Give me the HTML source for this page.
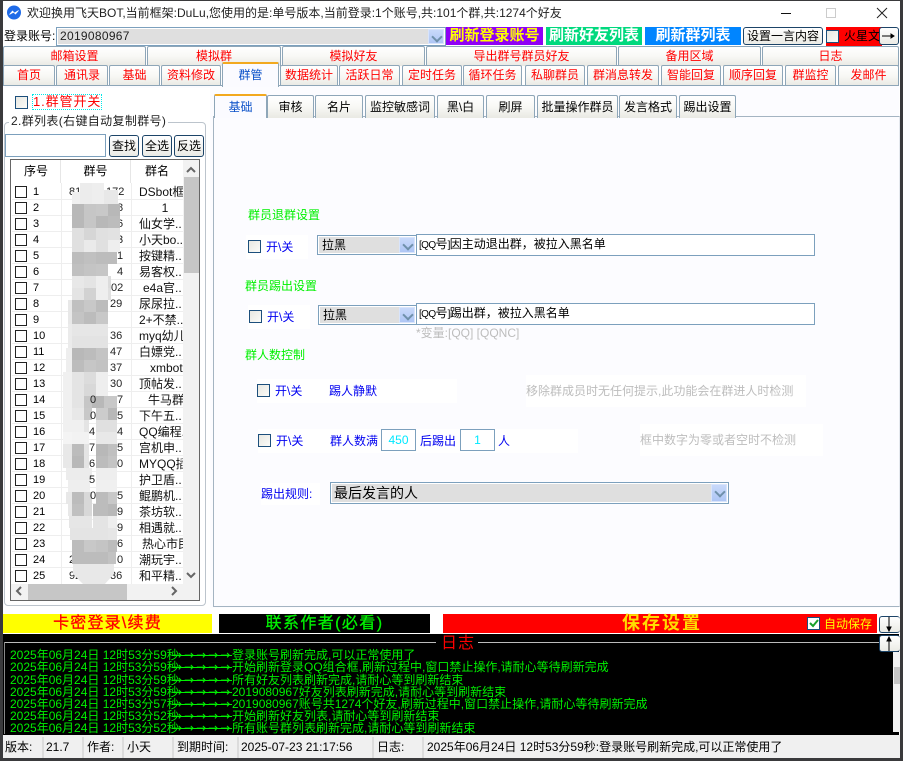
<!DOCTYPE html>
<html lang="zh"><head><meta charset="utf-8"><title>飞天BOT</title>
<style>
html,body{margin:0;padding:0;width:903px;height:761px;overflow:hidden;background:#3a3a3c}
*{box-sizing:border-box}
body{font:12px/16px "Liberation Sans","WenQuanYi Zen Hei","Noto Sans CJK SC",sans-serif;color:#000}
.a,.t,.l,.cb,.btn,.cmb,.inp,.s{position:absolute;white-space:nowrap}
.t{height:20px;line-height:19px;text-align:center;color:#f00;font-size:12px;background:linear-gradient(#fff,#f8f8f5 50%,#e9e9e3);border:1px solid #8ea6b8;border-bottom:0;border-radius:2px 2px 0 0;overflow:hidden}
.act{background:#fbfbff;border:1px solid #8ea6b8;border-top:2px solid #f2a91f;border-bottom:0;color:#0a50c8;z-index:3}
.st{height:23px;line-height:23px;top:95px;font-size:12px;color:#000}
.cb{width:13px;height:13px;border:1px solid #1c4f7c;background:linear-gradient(135deg,#e8e8e2,#fbfbf8)}
.btn{border:1px solid #1c4468;border-radius:3px;background:linear-gradient(#fff,#ebebe5);display:flex;align-items:center;justify-content:center;font-size:12px}
.inp{background:#fff;border:1px solid #7ca0bd;padding-left:2px}
.cmb{background:#dfdfdf;border:1px solid #7ca0bd;box-shadow:inset 0 0 0 1px #fff;font-size:12px;padding-left:4px}
.ar{position:absolute;right:1px;top:1px;bottom:1px;width:16px;background:linear-gradient(#c8d9fa,#aec6f5);border:1px solid #d8e4fb}
.ar:after{content:"";position:absolute;left:4px;top:3px;width:6px;height:6px;border:solid #6f90ab;border-width:0 2px 2px 0;transform:rotate(45deg)}
.g{color:#00f000;font-size:12px}.b{color:#0000f0;font-size:12px}
.gr{color:#bdbdbd;background:#fff;font-size:12px}
.s{top:736px;height:22px;line-height:22px;font-size:12px}
.sep{position:absolute;top:737px;height:21px;width:2px;background:#dcdcdc}
.h{position:absolute;top:160px;height:23px;line-height:23px;text-align:center;font-size:12px;border-right:1px solid #e6e6e6}
.ck{position:absolute;left:15px;width:12px;height:12px;border:1px solid #222;background:#fff}
.n{position:absolute;left:33px;width:20px;font-size:11px;line-height:16px}
.d{position:absolute;font-size:11px;line-height:16px;color:#222}
.m{position:absolute;left:139px;width:44px;overflow:hidden;font-size:12px;line-height:16px;white-space:nowrap;color:#111}
.hl{position:absolute;left:12px;width:171px;height:1px;background:#eee}
.lg{position:absolute;color:#00f000;font-size:12px;line-height:12px;white-space:nowrap;height:12px}
.lg i{font:12px/12px "DejaVu Sans",sans-serif;position:absolute;left:162px;width:60px;height:12px;letter-spacing:2px;background:linear-gradient(#00f000,#00f000) 0 6px/60px 1px no-repeat}
.lg b{font-weight:normal;position:absolute;left:222px}
.q{font-size:10px;letter-spacing:-.6px}
</style></head><body>

<!-- window -->
<div class="a" style="left:3px;top:1px;width:897px;height:757px;background:#fff"></div>

<!-- title -->
<svg class="a" style="left:6px;top:4px" width="16" height="17" viewBox="0 0 16 17"><circle cx="8" cy="8.5" r="7" fill="#1f6be8"/><path d="M3.5 10.5L6.5 7l2 2 4-2.5-3 3.5-2-1.8z" fill="#fff" stroke="#fff" stroke-width=".7"/></svg>
<div class="a" style="left:27px;top:4px;font:12px/18px 'Liberation Sans','Noto Sans CJK SC',sans-serif;color:#222">欢迎换用飞天BOT,当前框架:DuLu,您使用的是:单号版本,当前登录:1个账号,共:101个群,共:1274个好友</div>
<div class="a" style="left:781px;top:13px;width:10px;height:1px;background:#111"></div>
<div class="a" style="left:826px;top:8px;width:10px;height:10px;border:1px solid #ccc"></div>
<svg class="a" style="left:876px;top:7px" width="12" height="12"><path d="M1 1L11 11M11 1L1 11" stroke="#222" stroke-width="1"/></svg>

<!-- login row -->
<div class="a" style="left:4px;top:27px;font-size:12px;line-height:18px">登录账号:</div>
<div class="cmb" style="left:56px;top:27px;width:390px;height:19px;font-size:12px;line-height:17px;padding-left:3px;color:#222;letter-spacing:.3px">2019080967<span class="ar"></span></div>
<div class="a" style="left:446px;top:27px;width:97px;height:18px;background:#8f00f5;color:#ff0;text-align:center;font-size:15px;line-height:18px;font-weight:bold">刷新登录账号</div>
<div class="a" style="left:546px;top:27px;width:96px;height:18px;background:#00d97e;color:#fff;text-align:center;font-size:15px;line-height:18px;font-weight:bold">刷新好友列表</div>
<div class="a" style="left:645px;top:27px;width:96px;height:18px;background:#0085ff;color:#fff;text-align:center;font-size:15px;line-height:18px;font-weight:bold">刷新群列表</div>
<div class="btn" style="left:743px;top:27px;width:80px;height:18px">设置一言内容</div>
<div class="a" style="left:826px;top:27px;width:56px;height:19px;background:#f00;overflow:hidden;font-size:12px;line-height:19px;padding-left:18px">火星文</div>
<div class="cb" style="left:826px;top:30px"></div>
<div class="btn" style="left:879px;top:27px;width:20px;height:18px"></div>
<svg class="a" style="left:882px;top:30px" width="14" height="12"><path d="M0 6H12M9 4L12 6L9 8z" stroke="#000" fill="#000"/></svg>

<!-- tab rows -->
<div class="t" style="left:3px;top:46px;width:143px">邮箱设置</div>
<div class="t" style="left:147px;top:46px;width:134px">模拟群</div>
<div class="t" style="left:282px;top:46px;width:143px">模拟好友</div>
<div class="t" style="left:426px;top:46px;width:191px">导出群号群员好友</div>
<div class="t" style="left:618px;top:46px;width:143px">备用区域</div>
<div class="t" style="left:762px;top:46px;width:137px">日志</div>

<div class="t" style="left:3px;top:65px;width:52px;height:21px">首页</div>
<div class="t" style="left:56px;top:65px;width:52px;height:21px">通讯录</div>
<div class="t" style="left:109px;top:65px;width:51px;height:21px">基础</div>
<div class="t" style="left:161px;top:65px;width:60px;height:21px">资料修改</div>
<div class="t act" style="left:222px;top:62px;width:57px;height:25px;line-height:22px">群管</div>
<div class="t" style="left:280px;top:65px;width:58px;height:21px">数据统计</div>
<div class="t" style="left:339px;top:65px;width:61px;height:21px">活跃日常</div>
<div class="t" style="left:402px;top:65px;width:60px;height:21px">定时任务</div>
<div class="t" style="left:463px;top:65px;width:59px;height:21px">循环任务</div>
<div class="t" style="left:525px;top:65px;width:60px;height:21px">私聊群员</div>
<div class="t" style="left:587px;top:65px;width:72px;height:21px">群消息转发</div>
<div class="t" style="left:661px;top:65px;width:60px;height:21px">智能回复</div>
<div class="t" style="left:723px;top:65px;width:60px;height:21px">顺序回复</div>
<div class="t" style="left:785px;top:65px;width:51px;height:21px">群监控</div>
<div class="t" style="left:838px;top:65px;width:61px;height:21px">发邮件</div>
<div class="a" style="left:3px;top:85px;width:896px;height:1px;background:#8ea6b8;z-index:2"></div>
<div class="a" style="left:3px;top:86px;width:896px;height:522px;background:#fcfcff"></div>

<!-- left -->
<div class="a" style="left:4px;top:88px;width:206px;height:520px;background:#fff"></div>
<div class="cb" style="left:15px;top:96px"></div>
<div class="a" style="left:33px;top:95px;height:14px;line-height:14px;font-size:13px;letter-spacing:.9px;color:#f00;outline:1px dotted #00e8e8">1.群管开关</div>
<div class="a" style="left:4px;top:122px;width:202px;height:484px;border:1px solid #bcc4cc;border-radius:4px"></div>
<div class="a" style="left:9px;top:113px;background:#fff;padding:0 2px;font-size:12px;line-height:16px;color:#222;letter-spacing:.35px">2.群列表(右键自动复制群号)</div>
<div class="inp" style="left:5px;top:134px;width:101px;height:23px"></div>
<div class="btn" style="left:109px;top:135px;width:30px;height:22px">查找</div>
<div class="btn" style="left:142px;top:135px;width:30px;height:22px">全选</div>
<div class="btn" style="left:174px;top:135px;width:30px;height:22px">反选</div>

<div class="a" style="left:10px;top:159px;width:190px;height:442px;border:1px solid #666;background:#fff"></div>
<div class="h" style="left:12px;width:49px">序号</div>
<div class="h" style="left:61px;width:70px">群号</div>
<div class="h" style="left:131px;width:52px;border:0">群名</div>
<div class="a" style="left:61px;top:183px;width:1px;height:401px;background:#eee"></div>
<div class="a" style="left:131px;top:183px;width:1px;height:401px;background:#eee"></div>

<div class="hl" style="top:199px"></div><div class="hl" style="top:215px"></div><div class="hl" style="top:231px"></div><div class="hl" style="top:247px"></div><div class="hl" style="top:263px"></div><div class="hl" style="top:279px"></div><div class="hl" style="top:295px"></div><div class="hl" style="top:311px"></div><div class="hl" style="top:327px"></div><div class="hl" style="top:343px"></div><div class="hl" style="top:359px"></div><div class="hl" style="top:375px"></div><div class="hl" style="top:391px"></div><div class="hl" style="top:407px"></div><div class="hl" style="top:423px"></div><div class="hl" style="top:439px"></div><div class="hl" style="top:455px"></div><div class="hl" style="top:471px"></div><div class="hl" style="top:487px"></div><div class="hl" style="top:503px"></div><div class="hl" style="top:519px"></div><div class="hl" style="top:535px"></div><div class="hl" style="top:551px"></div><div class="hl" style="top:567px"></div>

<div class="ck" style="top:186px"></div><div class="n" style="top:184px">1</div><div class="m" style="top:184px">DSbot框架</div>
<div class="ck" style="top:202px"></div><div class="n" style="top:200px">2</div><div class="m" style="top:200px;text-align:center;padding-left:8px">1</div>
<div class="ck" style="top:218px"></div><div class="n" style="top:216px">3</div><div class="m" style="top:216px">仙女学..</div>
<div class="ck" style="top:234px"></div><div class="n" style="top:232px">4</div><div class="m" style="top:232px">小天bo..</div>
<div class="ck" style="top:250px"></div><div class="n" style="top:248px">5</div><div class="m" style="top:248px">按键精..</div>
<div class="ck" style="top:266px"></div><div class="n" style="top:264px">6</div><div class="m" style="top:264px">易客权..</div>
<div class="ck" style="top:282px"></div><div class="n" style="top:280px">7</div><div class="m" style="top:280px;left:143px;width:40px">e4a官..</div>
<div class="ck" style="top:298px"></div><div class="n" style="top:296px">8</div><div class="m" style="top:296px">尿尿拉..</div>
<div class="ck" style="top:314px"></div><div class="n" style="top:312px">9</div><div class="m" style="top:312px">2+不禁..</div>
<div class="ck" style="top:330px"></div><div class="n" style="top:328px">10</div><div class="m" style="top:328px">myq幼儿</div>
<div class="ck" style="top:346px"></div><div class="n" style="top:344px">11</div><div class="m" style="top:344px">白嫖党..</div>
<div class="ck" style="top:362px"></div><div class="n" style="top:360px">12</div><div class="m" style="top:360px;left:150px;width:33px">xmbot</div>
<div class="ck" style="top:378px"></div><div class="n" style="top:376px">13</div><div class="m" style="top:376px">顶帖发..</div>
<div class="ck" style="top:394px"></div><div class="n" style="top:392px">14</div><div class="m" style="top:392px;left:148px;width:35px">牛马群</div>
<div class="ck" style="top:410px"></div><div class="n" style="top:408px">15</div><div class="m" style="top:408px">下午五..</div>
<div class="ck" style="top:426px"></div><div class="n" style="top:424px">16</div><div class="m" style="top:424px">QQ编程..</div>
<div class="ck" style="top:442px"></div><div class="n" style="top:440px">17</div><div class="m" style="top:440px">宫机申..</div>
<div class="ck" style="top:458px"></div><div class="n" style="top:456px">18</div><div class="m" style="top:456px">MYQQ插..</div>
<div class="ck" style="top:474px"></div><div class="n" style="top:472px">19</div><div class="m" style="top:472px">护卫盾..</div>
<div class="ck" style="top:490px"></div><div class="n" style="top:488px">20</div><div class="m" style="top:488px">鲲鹏机..</div>
<div class="ck" style="top:506px"></div><div class="n" style="top:504px">21</div><div class="m" style="top:504px">茶坊软..</div>
<div class="ck" style="top:522px"></div><div class="n" style="top:520px">22</div><div class="m" style="top:520px">相遇就..</div>
<div class="ck" style="top:538px"></div><div class="n" style="top:536px">23</div><div class="m" style="top:536px;left:142px;width:41px">热心市民</div>
<div class="ck" style="top:554px"></div><div class="n" style="top:552px">24</div><div class="m" style="top:552px">潮玩宇..</div>
<div class="ck" style="top:570px"></div><div class="n" style="top:568px">25</div><div class="m" style="top:568px">和平精..</div>

<!-- visible digits -->
<div class="d" style="left:69px;top:184px">81</div><div class="d" style="left:106px;top:184px">172</div>
<div class="d" style="left:117px;top:200px">8</div><div class="d" style="left:117px;top:216px">6</div><div class="d" style="left:117px;top:232px">3</div><div class="d" style="left:117px;top:248px">1</div><div class="d" style="left:117px;top:264px">4</div><div class="d" style="left:111px;top:280px">02</div><div class="d" style="left:110px;top:296px">29</div><div class="d" style="left:110px;top:328px">36</div><div class="d" style="left:110px;top:344px">47</div><div class="d" style="left:110px;top:360px">37</div><div class="d" style="left:110px;top:376px">30</div><div class="d" style="left:117px;top:392px">7</div><div class="d" style="left:117px;top:408px">5</div><div class="d" style="left:117px;top:424px">4</div><div class="d" style="left:117px;top:440px">5</div><div class="d" style="left:117px;top:456px">0</div><div class="d" style="left:117px;top:488px">5</div><div class="d" style="left:117px;top:504px">9</div><div class="d" style="left:117px;top:520px">9</div><div class="d" style="left:117px;top:536px">6</div><div class="d" style="left:117px;top:552px">0</div><div class="d" style="left:110px;top:568px">36</div><div class="d" style="left:69px;top:552px">2</div><div class="d" style="left:69px;top:568px">92</div>

<!-- mosaic -->
<svg class="a" style="left:60px;top:180px" width="70" height="410" viewBox="60 180 70 410">
<g id="mo">
<rect x="80" y="183" width="12" height="21" fill="#ececec"/><rect x="92" y="183" width="12" height="21" fill="#eee"/><rect x="104" y="190" width="14" height="14" fill="#e8e8e8"/><rect x="72" y="192" width="8" height="12" fill="#f0f0f0"/>
<rect x="72" y="204" width="12" height="12" fill="#b8b8b8"/><rect x="84" y="204" width="12" height="12" fill="#c6c6c6"/><rect x="96" y="204" width="12" height="12" fill="#c8c8c8"/><rect x="108" y="204" width="12" height="12" fill="#b8b8b8"/>
<rect x="72" y="216" width="12" height="12" fill="#b8b8b8"/><rect x="84" y="216" width="12" height="12" fill="#c6c6c6"/><rect x="96" y="216" width="12" height="12" fill="#b8b8b8"/><rect x="108" y="216" width="12" height="12" fill="#bcbcbc"/>
<rect x="72" y="228" width="12" height="12" fill="#e0e0e0"/><rect x="84" y="228" width="12" height="12" fill="#d6d6d6"/><rect x="96" y="228" width="12" height="12" fill="#e0e0e0"/><rect x="108" y="228" width="12" height="12" fill="#e2e2e2"/>
<rect x="72" y="240" width="12" height="12" fill="#e0e0e0"/><rect x="84" y="240" width="12" height="12" fill="#eaeaea"/><rect x="96" y="240" width="12" height="12" fill="#e0e0e0"/><rect x="108" y="240" width="12" height="12" fill="#eeeeee"/>
<rect x="72" y="252" width="12" height="12" fill="#bcbcbc"/><rect x="84" y="252" width="12" height="12" fill="#c0c0c0"/><rect x="96" y="252" width="12" height="12" fill="#bcbcbc"/><rect x="108" y="252" width="9" height="12" fill="#bcbcbc"/>
<rect x="72" y="264" width="12" height="12" fill="#c0c0c0"/><rect x="84" y="264" width="12" height="12" fill="#c4c4c4"/><rect x="96" y="264" width="12" height="12" fill="#c6c6c6"/>
<rect x="72" y="276" width="12" height="12" fill="#e8e8e8"/><rect x="84" y="276" width="12" height="12" fill="#e4e4e4"/><rect x="96" y="276" width="12" height="12" fill="#eeeeee"/><rect x="108" y="276" width="3" height="12" fill="#dcdcdc"/>
<rect x="72" y="288" width="12" height="12" fill="#e4e4e4"/><rect x="84" y="288" width="12" height="12" fill="#d2d2d2"/><rect x="96" y="288" width="12" height="12" fill="#eeeeee"/><rect x="108" y="288" width="3" height="12" fill="#e0e0e0"/>
<rect x="68" y="300" width="4" height="12" fill="#e8e8e8"/><rect x="72" y="300" width="12" height="12" fill="#c0c0c0"/><rect x="84" y="300" width="12" height="12" fill="#c8c8c8"/><rect x="96" y="300" width="12" height="12" fill="#bcbcbc"/>
<rect x="68" y="312" width="4" height="12" fill="#e8e8e8"/><rect x="72" y="312" width="12" height="12" fill="#c4c4c4"/><rect x="84" y="312" width="12" height="12" fill="#bcbcbc"/><rect x="96" y="312" width="12" height="12" fill="#c8c8c8"/>
<rect x="68" y="324" width="4" height="24" fill="#ebebeb"/><rect x="72" y="324" width="36" height="12" fill="#e6e6e6"/><rect x="72" y="336" width="36" height="12" fill="#e3e3e3"/>
<rect x="66" y="348" width="6" height="24" fill="#eee"/><rect x="72" y="348" width="12" height="12" fill="#b8b8b8"/><rect x="84" y="348" width="12" height="12" fill="#bcbcbc"/><rect x="96" y="348" width="12" height="12" fill="#c4c4c4"/>
<rect x="72" y="360" width="12" height="12" fill="#bcbcbc"/><rect x="84" y="360" width="12" height="12" fill="#c6c6c6"/><rect x="96" y="360" width="12" height="12" fill="#c2c2c2"/>
<rect x="63" y="372" width="9" height="24" fill="#f0f0f0"/><rect x="72" y="372" width="12" height="12" fill="#e4e4e4"/><rect x="84" y="372" width="12" height="12" fill="#dcdcdc"/><rect x="96" y="372" width="12" height="12" fill="#eeeeee"/>
<rect x="72" y="384" width="12" height="12" fill="#e4e4e4"/><rect x="84" y="384" width="12" height="12" fill="#d8d8d8"/><rect x="96" y="384" width="12" height="12" fill="#eeeeee"/>
<rect x="63" y="396" width="9" height="36" fill="#f0f0f0"/><rect x="72" y="396" width="12" height="12" fill="#e4e4e4"/><rect x="84" y="396" width="12" height="12" fill="#c6c6c6"/><rect x="92" y="396" width="12" height="12" fill="#b8b8b8"/><rect x="104" y="396" width="13" height="12" fill="#c8c8c8"/>
<rect x="72" y="408" width="12" height="12" fill="#e8e8e8"/><rect x="84" y="408" width="8" height="12" fill="#c8c8c8"/><rect x="96" y="408" width="12" height="12" fill="#cccccc"/><rect x="108" y="408" width="9" height="12" fill="#b8b8b8"/>
<rect x="72" y="420" width="12" height="12" fill="#f0f0f0"/><rect x="84" y="420" width="5" height="12" fill="#e4e4e4"/><rect x="96" y="420" width="12" height="12" fill="#e0e0e0"/><rect x="108" y="420" width="9" height="12" fill="#e0e0e0"/>
<rect x="63" y="432" width="9" height="12" fill="#f4f4f4"/><rect x="72" y="432" width="17" height="12" fill="#f2f2f2"/><rect x="96" y="432" width="21" height="12" fill="#e8e8e8"/>
<rect x="63" y="444" width="9" height="24" fill="#e8e8e8"/><rect x="72" y="444" width="12" height="12" fill="#bcbcbc"/><rect x="96" y="444" width="12" height="12" fill="#b8b8b8"/><rect x="108" y="444" width="9" height="12" fill="#c0c0c0"/><rect x="84" y="444" width="5" height="12" fill="#e4e4e4"/>
<rect x="72" y="456" width="12" height="12" fill="#b8b8b8"/><rect x="96" y="456" width="12" height="12" fill="#bcbcbc"/><rect x="108" y="456" width="9" height="12" fill="#c4c4c4"/><rect x="84" y="456" width="5" height="12" fill="#e4e4e4"/>
<rect x="66" y="468" width="26" height="12" fill="#ececec"/><rect x="96" y="468" width="21" height="12" fill="#eeeeee"/>
<rect x="68" y="480" width="22" height="12" fill="#eeeeee"/><rect x="96" y="480" width="21" height="12" fill="#f0f0f0"/>
<rect x="66" y="492" width="6" height="12" fill="#e8e8e8"/><rect x="72" y="492" width="12" height="12" fill="#bcbcbc"/><rect x="84" y="492" width="8" height="12" fill="#d8d8d8"/><rect x="96" y="492" width="12" height="12" fill="#bcbcbc"/><rect x="108" y="492" width="9" height="12" fill="#c8c8c8"/>
<rect x="68" y="504" width="4" height="12" fill="#e8e8e8"/><rect x="72" y="504" width="12" height="12" fill="#c0c0c0"/><rect x="84" y="504" width="8" height="12" fill="#d8d8d8"/><rect x="93" y="504" width="15" height="12" fill="#bcbcbc"/><rect x="108" y="504" width="9" height="12" fill="#b8b8b8"/>
<rect x="69" y="516" width="23" height="12" fill="#e6e6e6"/><rect x="93" y="516" width="15" height="12" fill="#e4e4e4"/><rect x="108" y="516" width="9" height="12" fill="#eeeeee"/>
<rect x="70" y="528" width="38" height="12" fill="#e4e4e4"/><rect x="108" y="528" width="9" height="12" fill="#e6e6e6"/>
<rect x="72" y="540" width="12" height="12" fill="#bcbcbc"/><rect x="84" y="540" width="12" height="12" fill="#c8c8c8"/><rect x="96" y="540" width="12" height="12" fill="#c4c4c4"/><rect x="108" y="540" width="9" height="12" fill="#bcbcbc"/>
<rect x="72" y="552" width="12" height="12" fill="#bcbcbc"/><rect x="84" y="552" width="12" height="12" fill="#bcbcbc"/><rect x="96" y="552" width="12" height="12" fill="#bcbcbc"/><rect x="108" y="552" width="8" height="12" fill="#c2c2c2"/>
<path d="M73 564H114V574L104 585H84L73 574z" fill="#e8e8e8"/>
</g>
</svg>
<div class="d" style="left:90px;top:392px">0</div><div class="d" style="left:90px;top:408px">0</div><div class="d" style="left:89px;top:424px">4</div><div class="d" style="left:89px;top:440px">7</div><div class="d" style="left:89px;top:456px">6</div><div class="d" style="left:89px;top:472px">5</div><div class="d" style="left:90px;top:488px">0</div>

<!-- list scrollbars -->
<div class="a" style="left:183px;top:160px;width:16px;height:424px;background:#f2f2f2"></div>
<div class="a" style="left:184px;top:177px;width:15px;height:96px;background:#c6c6c6"></div>
<svg class="a" style="left:186px;top:166px" width="11" height="8"><path d="M1 6L5 2L9 6" fill="none" stroke="#666" stroke-width="2"/></svg>
<svg class="a" style="left:186px;top:571px" width="11" height="8"><path d="M1 2L5 6L9 2" fill="none" stroke="#666" stroke-width="2"/></svg>
<div class="a" style="left:11px;top:584px;width:188px;height:16px;background:#f2f2f2"></div>
<div class="a" style="left:28px;top:584px;width:99px;height:16px;background:#c6c6c6"></div>
<svg class="a" style="left:15px;top:586px" width="9" height="11"><path d="M6 1L2 5L6 9" fill="none" stroke="#666" stroke-width="2"/></svg>
<svg class="a" style="left:170px;top:586px" width="9" height="11"><path d="M2 1L6 5L2 9" fill="none" stroke="#666" stroke-width="2"/></svg>

<!-- right panel -->
<div class="a" style="left:213px;top:116px;width:687px;height:491px;border:1px solid #a4b4c2;border-right-color:#e4e8ee;background:#fcfcff"></div>
<div class="t act st" style="left:214px;top:94px;width:53px;height:24px;color:#0a50c8;line-height:22px">基础</div>
<div class="t st" style="left:267px;width:47px">审核</div>
<div class="t st" style="left:315px;width:48px">名片</div>
<div class="t st" style="left:365px;width:70px">监控敏感词</div>
<div class="t st" style="left:437px;width:47px">黑\白</div>
<div class="t st" style="left:486px;width:49px">刷屏</div>
<div class="t st" style="left:537px;width:81px">批量操作群员</div>
<div class="t st" style="left:619px;width:58px">发言格式</div>
<div class="t st" style="left:679px;width:57px">踢出设置</div>

<div class="a g" style="left:248px;top:207px">群员退群设置</div>
<div class="a" style="left:246px;top:235px;width:62px;height:24px;background:#fff"></div>
<div class="cb" style="left:248px;top:240px"></div>
<div class="a b" style="left:266px;top:239px">开\关</div>
<div class="cmb" style="left:317px;top:235px;width:100px;height:20px;line-height:18px">拉黑<span class="ar"></span></div>
<div class="inp" style="left:416px;top:234px;width:399px;height:22px;line-height:19px;font-size:12px"><span class="q">[QQ</span>号<span class="q">]</span>因主动退出群，被拉入黑名单</div>

<div class="a g" style="left:245px;top:278px">群员踢出设置</div>
<div class="a" style="left:248px;top:305px;width:62px;height:24px;background:#fff"></div>
<div class="cb" style="left:249px;top:310px"></div>
<div class="a b" style="left:267px;top:309px">开\关</div>
<div class="cmb" style="left:318px;top:305px;width:99px;height:20px;line-height:18px">拉黑<span class="ar"></span></div>
<div class="inp" style="left:416px;top:303px;width:399px;height:22px;line-height:19px;font-size:12px"><span class="q">[QQ</span>号<span class="q">]</span>踢出群，被拉入黑名单</div>
<div class="a" style="left:416px;top:325px;color:#bdbdbd;font-size:12px">*变量:[QQ] [QQNC]</div>

<div class="a g" style="left:245px;top:347px">群人数控制</div>
<div class="a" style="left:257px;top:379px;width:200px;height:24px;background:#fff"></div>
<div class="cb" style="left:257px;top:384px"></div>
<div class="a b" style="left:275px;top:383px">开\关</div>
<div class="a b" style="left:329px;top:383px">踢人静默</div>
<div class="a gr" style="left:526px;top:375px;width:280px;height:32px;line-height:32px">移除群成员时无任何提示,此功能会在群进人时检测</div>

<div class="a" style="left:258px;top:429px;width:320px;height:24px;background:#fff"></div>
<div class="cb" style="left:258px;top:434px"></div>
<div class="a b" style="left:276px;top:433px">开\关</div>
<div class="a b" style="left:330px;top:433px">群人数满</div>
<div class="inp" style="left:381px;top:429px;width:35px;height:22px;padding:0;text-align:center;line-height:20px;color:#00e8ff;font-size:12px">450</div>
<div class="a b" style="left:420px;top:433px">后踢出</div>
<div class="inp" style="left:460px;top:429px;width:35px;height:22px;padding:0;text-align:center;line-height:20px;color:#00e8ff;font-size:12px">1</div>
<div class="a b" style="left:498px;top:433px">人</div>
<div class="a gr" style="left:640px;top:424px;width:183px;height:32px;line-height:32px">框中数字为零或者空时不检测</div>

<div class="a b" style="left:261px;top:486px;background:#fff;padding:3px 8px 3px 0;margin-top:-3px;color:#0000f0">踢出规则:</div>
<div class="cmb" style="left:330px;top:482px;width:399px;height:22px;line-height:20px;font-size:14px;padding-left:3px">最后发言的人<span class="ar"></span></div>

<!-- bottom buttons -->
<div class="a" style="left:3px;top:608px;width:897px;height:26px;background:#fff"></div>
<div class="a" style="left:3px;top:614px;width:209px;height:19px;background:#ff0;color:#f00;text-align:center;font-size:16px;line-height:19px;letter-spacing:1.2px;-webkit-text-stroke:.3px #f00">卡密登录\续费</div>
<div class="a" style="left:219px;top:614px;width:211px;height:19px;background:#000;color:#00f000;text-align:center;font-size:16px;line-height:19px;letter-spacing:1.4px;-webkit-text-stroke:.3px #00f000">联系作者(必看)</div>
<div class="a" style="left:443px;top:614px;width:434px;height:19px;background:#f00;color:#fd0;font-size:18px;line-height:19px;font-weight:bold;padding-left:179px;letter-spacing:2px">保存设置</div>
<div class="cb" style="left:807px;top:617px;background:#fff"></div>
<svg class="a" style="left:809px;top:619px" width="10" height="10"><path d="M1 4L4 7L9 1" fill="none" stroke="#1aa02a" stroke-width="2"/></svg>
<div class="a" style="left:824px;top:616px;color:#ff0;font-size:12px">自动保存</div>

<!-- log -->
<div class="a" style="left:3px;top:634px;width:896px;height:101px;background:#000;overflow:hidden">
 <div class="a" style="left:2px;top:8px;width:431px;height:1px;background:#bbb"></div>
 <div class="a" style="left:475px;top:8px;width:403px;height:1px;background:#bbb"></div>
 <div class="a" style="left:1px;top:8px;width:1px;height:92px;background:#888"></div>
 <div class="a" style="left:438px;top:1px;color:#f00;font-size:16px;line-height:18px;letter-spacing:1px">日志</div>
 <div class="lg" style="top:15px;left:7px">2025年06月24日 12时53分59秒<i>→→→→→</i><b>登录账号刷新完成,可以正常使用了</b></div>
 <div class="lg" style="top:27px;left:7px">2025年06月24日 12时53分59秒<i>→→→→→</i><b>开始刷新登录QQ组合框,刷新过程中,窗口禁止操作,请耐心等待刷新完成</b></div>
 <div class="lg" style="top:40px;left:7px">2025年06月24日 12时53分59秒<i>→→→→→</i><b>所有好友列表刷新完成,请耐心等到刷新结束</b></div>
 <div class="lg" style="top:52px;left:7px">2025年06月24日 12时53分59秒<i>→→→→→</i><b>2019080967好友列表刷新完成,请耐心等到刷新结束</b></div>
 <div class="lg" style="top:64px;left:7px">2025年06月24日 12时53分57秒<i>→→→→→</i><b>2019080967账号共1274个好友,刷新过程中,窗口禁止操作,请耐心等待刷新完成</b></div>
 <div class="lg" style="top:76px;left:7px">2025年06月24日 12时53分52秒<i>→→→→→</i><b>开始刷新好友列表,请耐心等到刷新结束</b></div>
 <div class="lg" style="top:88px;left:7px">2025年06月24日 12时53分52秒<i>→→→→→</i><b>所有账号群列表刷新完成,请耐心等到刷新结束</b></div>
</div>
<div class="a" style="left:893px;top:652px;width:7px;height:80px;background:#f2f2f2"></div>
<div class="a" style="left:894px;top:667px;width:6px;height:17px;background:#c6c6c6"></div>
<div class="btn" style="left:879px;top:616px;width:21px;height:17px;z-index:4;border-right:0"></div>
<div class="btn" style="left:879px;top:635px;width:21px;height:17px;z-index:4;border-right:0"></div>
<svg class="a" style="left:884px;top:617px;z-index:5" width="10" height="15"><path d="M5 0V14M3 10L5 14L7 10z" stroke="#000" fill="#000"/></svg>
<svg class="a" style="left:884px;top:636px;z-index:5" width="10" height="15"><path d="M5 15V1M3 5L5 1L7 5z" stroke="#000" fill="#000"/></svg>

<!-- status bar -->
<div class="a" style="left:3px;top:735px;width:897px;height:23px;background:#f0f0f0"></div>
<div class="s" style="left:5px">版本:</div><div class="sep" style="left:42px"></div>
<div class="s" style="left:46px">21.7</div><div class="sep" style="left:82px"></div>
<div class="s" style="left:87px">作者:</div><div class="sep" style="left:122px"></div>
<div class="s" style="left:127px">小天</div><div class="sep" style="left:172px"></div>
<div class="s" style="left:177px">到期时间:</div><div class="sep" style="left:237px"></div>
<div class="s" style="left:241px">2025-07-23 21:17:56</div><div class="sep" style="left:372px"></div>
<div class="s" style="left:377px">日志:</div><div class="sep" style="left:422px"></div>
<div class="s" style="left:427px">2025年06月24日 12时53分59秒:登录账号刷新完成,可以正常使用了</div>
</body></html>
